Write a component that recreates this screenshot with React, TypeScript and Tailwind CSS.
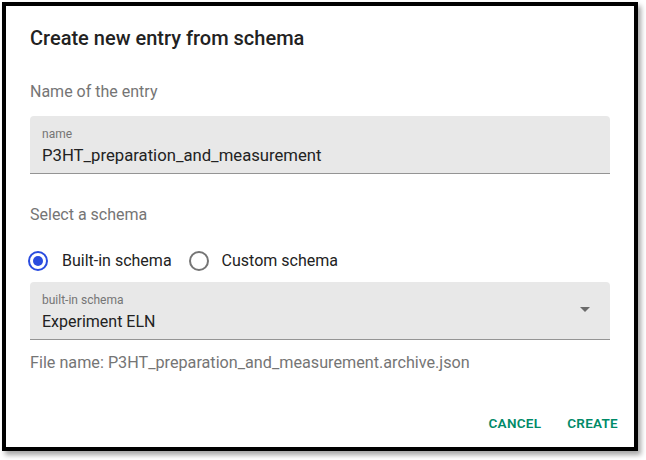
import { useState } from "react";

const FONT = { fontFamily: "Roboto, 'Noto Sans', sans-serif" };

function Radio({ checked }: { checked: boolean }) {
  return (
    <span
      className={`flex h-5 w-5 items-center justify-center rounded-full border-2 ${
        checked ? "border-[#2a4cdf]" : "border-[#757575]"
      }`}
    >
      {checked && <span className="h-2.5 w-2.5 rounded-full bg-[#2a4cdf]" />}
    </span>
  );
}

export default function App() {
  const [kind, setKind] = useState<"builtin" | "custom">("builtin");
  const name = "P3HT_preparation_and_measurement";

  return (
    <div className="min-h-screen bg-white p-[2px]" style={FONT}>
      <div className="flex h-[449px] w-[636px] flex-col border-4 border-black bg-white shadow-[3px_4px_5px_rgba(0,0,0,0.35)]">
        <div className="flex flex-1 flex-col px-6">
          {/* Title */}
          <h2 className="mt-4 text-[20px] font-medium leading-8 text-[#222]">
            Create new entry from schema
          </h2>

          {/* Name */}
          <p className="mt-[26px] text-[16px] leading-6 text-[#757575]">Name of the entry</p>
          <div className="mt-3 h-[58px] rounded-t border-b border-[#949494] bg-[#e8e8e8] px-3 pt-[10px]">
            <div className="text-[12px] leading-4 text-[#757575]">name</div>
            <div className="mt-[2px] text-[16.7px] leading-6 text-[#222]">{name}</div>
          </div>

          {/* Schema */}
          <p className="mt-[29px] text-[16px] leading-6 text-[#757575]">Select a schema</p>
          <div className="mt-[13px] flex h-[42px] items-center">
            <button
              className="ml-[-2px] flex items-center"
              onClick={() => setKind("builtin")}
            >
              <Radio checked={kind === "builtin"} />
              <span className="ml-[14px] text-[16px] text-[#222]">Built-in schema</span>
            </button>
            <button className="ml-[17px] flex items-center" onClick={() => setKind("custom")}>
              <Radio checked={kind === "custom"} />
              <span className="ml-[13px] text-[16px] text-[#222]">Custom schema</span>
            </button>
          </div>
          <div className="flex h-[58px] items-center rounded-t border-b border-[#949494] bg-[#e8e8e8] pl-3 pr-[20px]">
            <div className="flex-1 pt-[5px]">
              <div className="text-[12px] leading-4 text-[#757575]">built-in schema</div>
              <div className="mt-[2px] text-[16px] leading-6 text-[#222]">Experiment ELN</div>
            </div>
            <svg width="10" height="5" viewBox="0 0 10 5" className="mb-[2px]">
              <path d="M0 0 L10 0 L5 5 Z" fill="#6b6b6b" />
            </svg>
          </div>
          <p className="mt-[13px] text-[16.2px] leading-5 text-[#757575]">
            File name: {name}.archive.json
          </p>
        </div>

        {/* Actions */}
        <div className="flex justify-end gap-[26px] pb-[14px] pr-4">
          <button className="text-[13.5px] font-semibold tracking-[0.02em] text-[#008a67]">
            CANCEL
          </button>
          <button className="text-[13.5px] font-semibold tracking-[0.02em] text-[#008a67]">
            CREATE
          </button>
        </div>
      </div>
    </div>
  );
}
